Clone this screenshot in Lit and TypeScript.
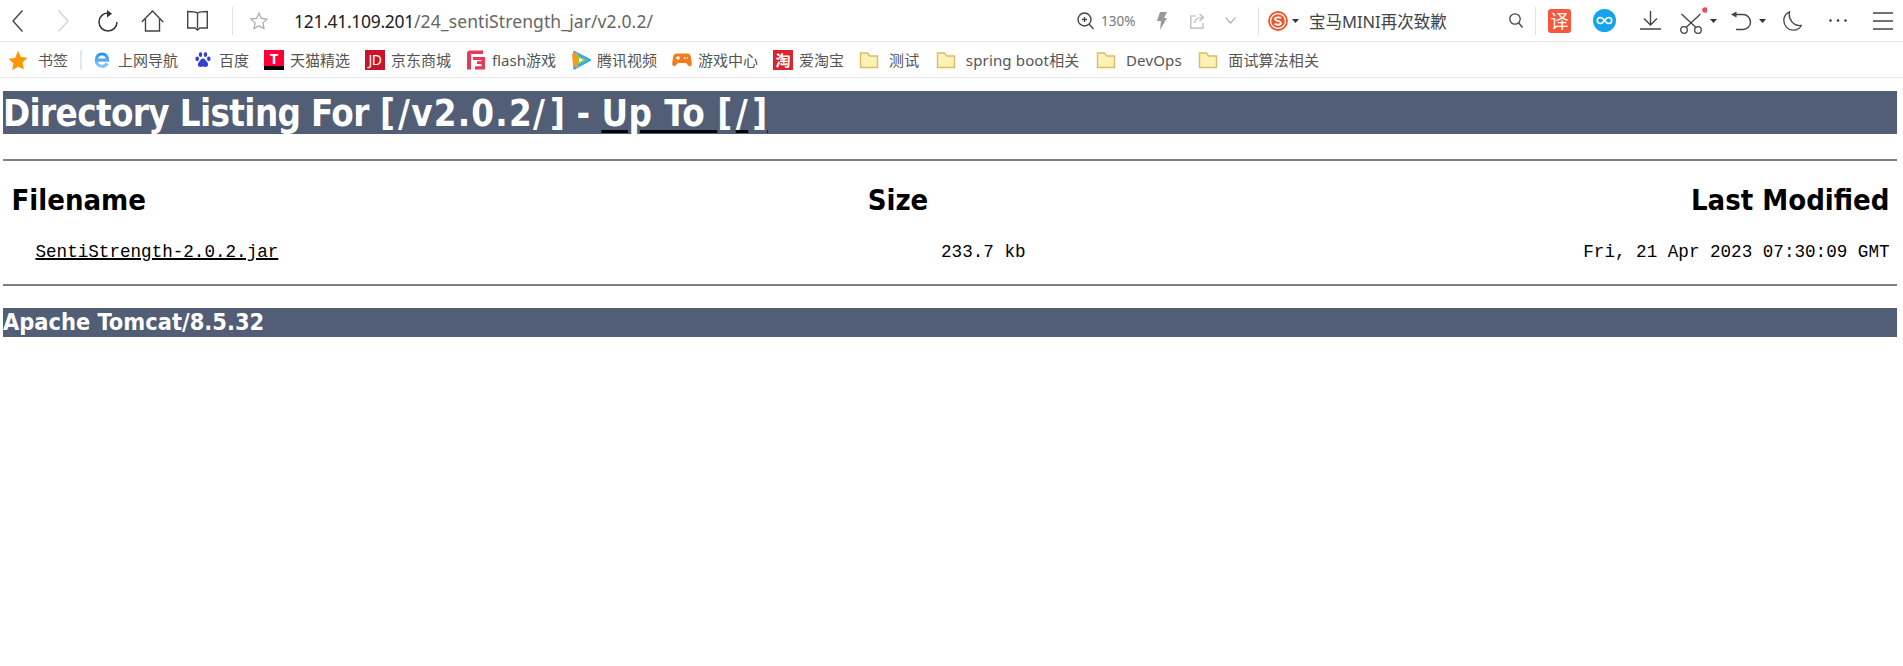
import { LitElement, html, css, svg } from 'lit';
import { customElement } from 'lit/decorators.js';

const ink = '#444';

const folder = svg`<svg class="ico" viewBox="0 0 20 20"><path d="M1.500 17.500V3h7l2 3h8v11.500z" fill="#fdf1b4" stroke="#d9bc6c" stroke-width="1.400"/></svg>`;

interface Bookmark {
  icon: unknown;
  label: string;
  folder?: boolean;
}

const bookmarks: Bookmark[] = [
  {
    label: '上网导航',
    icon: svg`<svg class="ico" viewBox="0 0 20 20"><defs><linearGradient id="ie" x1="0" y1="0" x2="0" y2="1"><stop offset="0" stop-color="#2f8ff0"/><stop offset="1" stop-color="#7fcbf8"/></linearGradient></defs><path d="M4.500 10.200h11.200C15.600 6.600 13.400 4 10 4S4.300 6.800 4.300 10.200 6.600 16.300 10 16.300c2.300 0 4.200-1 5.200-2.800" fill="none" stroke="url(#ie)" stroke-width="3.200"/></svg>`,
  },
  {
    label: '百度',
    icon: svg`<svg class="ico" viewBox="0 0 20 20" fill="#3240d8"><ellipse cx="7.500" cy="4.500" rx="1.700" ry="2.500"/><ellipse cx="12.500" cy="4.500" rx="1.700" ry="2.500"/><ellipse cx="4.200" cy="8.800" rx="1.800" ry="2.400"/><ellipse cx="15.800" cy="8.800" rx="1.800" ry="2.400"/><path d="M10 8.500c-2 0-2.500 2-4 3.500-1.800 1.700-1.500 5 1.500 5 1 0 1.500-.4 2.500-.4s1.500.4 2.500.4c3 0 3.300-3.300 1.500-5-1.500-1.500-2-3.500-4-3.500z"/></svg>`,
  },
  {
    label: '天猫精选',
    icon: html`<span class="ico tile tmall">T</span>`,
  },
  {
    label: '京东商城',
    icon: html`<span class="ico tile jd">JD</span>`,
  },
  {
    label: 'flash游戏',
    icon: svg`<svg class="ico" viewBox="0 0 20 20"><path d="M1 3.500Q1 .5 4 .5H17V4H5V19.500H1z" fill="#e8395a"/><path d="M7 7H19V19.500H9V16.300H15.500V14H11V11.200H15.500V10H7z" fill="#e8395a"/></svg>`,
  },
  {
    label: '腾讯视频',
    icon: svg`<svg class="ico" viewBox="0 0 20 20"><path d="M3 1.500 19.500 10 3 19z" fill="#3aa6ee" stroke="#3aa6ee" stroke-width="1.500" stroke-linejoin="round"/><path d="M1 4 7 2V18L2 16z" fill="#f59a23"/><path d="M6 5.500 16 10 6 15z" fill="#8ccf2d"/><path d="M8 7.800 12.500 10 8 12.500z" fill="#fff"/></svg>`,
  },
  {
    label: '游戏中心',
    icon: svg`<svg class="ico" viewBox="0 0 20 20"><path d="M4.500 3.500h11c2 0 3 1.500 3.500 4l.8 6c.3 2.500-2.300 3.500-3.800 1.800L14 13H6l-2 2.300C2.500 17 0 16 .2 13.500l.8-6c.5-2.500 1.500-4 3.500-4z" fill="#f57c1c"/><path d="M4 8h4M6 6v4M12 8h1.500M15 8h1" stroke="#fff" stroke-width="1.400"/></svg>`,
  },
  {
    label: '爱淘宝',
    icon: html`<span class="ico tile taobao">淘</span>`,
  },
  { label: '测试', icon: folder, folder: true },
  { label: 'spring boot相关', icon: folder, folder: true },
  { label: 'DevOps', icon: folder, folder: true },
  { label: '面试算法相关', icon: folder, folder: true },
];

@customElement('app-root')
export class AppRoot extends LitElement {
  static styles = css`
    :host {
      display: block;
      background: #fff;
      min-height: 666px;
      font-family: 'Noto Sans', 'Noto Sans CJK SC', sans-serif;
    }

    svg {
      display: block;
      flex: none;
    }

    .toolbar {
      display: flex;
      align-items: center;
      height: 41px;
      padding: 0 10px 0 12px;
      border-bottom: 1px solid #e6e6e6;
    }

    .sep {
      width: 1px;
      height: 28px;
      background: #e2e2e2;
      flex: none;
    }

    .fwd { margin-left: 35px; }
    .refresh { margin-left: 29px; }
    .home { margin-left: 23px; }
    .book { margin-left: 23px; }
    .sep-a { margin-left: 24px; }
    .star { margin-left: 17px; }

    .url {
      margin-left: 26px;
      font-size: 17.5px;
      color: #666;
      white-space: nowrap;
      flex: 1;
      letter-spacing: 0.1px;
    }

    .url b {
      font-weight: 400;
      color: #222;
      letter-spacing: -0.3px;
    }

    .zoom-pct {
      margin-left: 7px;
      font-size: 13.5px;
      color: #777;
      width: 34px;
      white-space: nowrap;
    }

    .bolt { margin-left: 22px; }
    .share { margin-left: 23px; }
    .chev { margin-left: 20px; }
    .sep-b { margin-left: 22px; }
    .sogou { margin-left: 9px; }
    .caret-s { margin-left: 4px; }
    .caret-t { margin-left: 3px; }
    .caret-u { margin-left: 7px; }

    .news {
      margin-left: 10px;
      width: 200px;
      font-size: 16.5px;
      color: #444;
      white-space: nowrap;
    }

    .sep-c { margin-left: 12px; }

    .fanyi {
      margin-left: 12px;
      width: 23px;
      height: 24px;
      border-radius: 3px;
      background: #f5583c;
      color: #fff;
      font-size: 18px;
      line-height: 24px;
      text-align: center;
      flex: none;
    }

    .blue { margin-left: 22px; }
    .down { margin-left: 24px; }
    .cut { margin-left: 19px; }
    .undo { margin-left: 14px; }
    .moon { margin-left: 17px; }
    .dots { margin-left: 27px; }
    .menu { margin-left: 26px; }

    .bookmarks {
      display: flex;
      align-items: center;
      height: 35px;
      padding-left: 8px;
      border-bottom: 1px solid #e6e6e6;
      font-size: 15px;
      color: #555;
      white-space: nowrap;
    }

    .mark {
      display: flex;
      align-items: center;
      gap: 6px;
      margin-right: 15px;
    }

    .mark.dir {
      gap: 10px;
      margin-right: 16.5px;
      letter-spacing: 0.15px;
    }

    .mark.root {
      gap: 10px;
      margin-right: 12px;
    }

    .bar-sep {
      width: 2px;
      height: 20px;
      background: #e6e6e6;
      margin-right: 10px;
    }

    .ico {
      width: 20px;
      height: 20px;
      flex: none;
    }

    .tile {
      display: block;
      text-align: center;
      color: #fff;
      line-height: 20px;
    }

    .tmall {
      background: linear-gradient(#ff0036 78%, #000 78%);
      font-weight: 700;
      font-size: 15px;
      line-height: 16px;
    }

    .jd {
      background: #c9132a;
      font-size: 14px;
      letter-spacing: -0.5px;
    }

    .taobao {
      background: #d9262e;
      font-size: 15px;
      font-weight: 700;
    }

    .page {
      padding: 13px 6px 0 3px;
    }

    h1,
    h3 {
      margin: 0;
      background: #525d76;
      color: #fff;
      font-family: 'DejaVu Sans', sans-serif;
      font-stretch: condensed;
      font-weight: 700;
    }

    h1 {
      font-size: 36.4px;
      line-height: 40px;
      padding-top: 3px;
      white-space: nowrap;
    }

    h1 a {
      color: #fff;
      letter-spacing: 0.5px;
      text-decoration: underline #000;
      text-decoration-thickness: 3px;
      text-underline-offset: 4px;
    }

    .tight {
      letter-spacing: -0.65px;
    }

    .path {
      letter-spacing: 1.2px;
    }

    .open {
      padding-right: 3px;
    }

    .close {
      padding-left: 4px;
    }

    h3 {
      font-size: 23.4px;
      line-height: 29px;
    }

    hr {
      margin: 0;
      border: none;
      height: 2px;
      background: #808080;
    }

    .rule-top {
      margin-top: 25px;
    }

    .rule-bottom {
      margin-bottom: 22px;
    }

    .listing {
      display: grid;
      grid-template-columns: 761px 268px 1fr;
      padding-top: 14px;
      padding-bottom: 13px;
    }

    .listing > * {
      padding: 6.5px;
    }

    .listing > .first {
      padding-left: 8.5px;
    }

    .listing > .right {
      padding-right: 7.5px;
    }

    .listing > .size {
      padding-right: 6.5px;
    }

    .th {
      font-family: 'DejaVu Sans', sans-serif;
      font-stretch: condensed;
      font-weight: 700;
      font-size: 29px;
      line-height: 37px;
      color: #000;
    }

    .td {
      font-family: 'Liberation Mono', monospace;
      font-size: 17.6px;
      line-height: 24px;
      color: #000;
      padding-top: 15px;
    }

    .center { text-align: center; }
    .right { text-align: right; }

    .td a {
      color: #000;
      text-decoration: underline;
      text-decoration-thickness: 2px;
    }

    .indent {
      padding-left: 26px;
    }
  `;

  render() {
    return html`
      <div class="toolbar">
        <svg width="11" height="22" viewBox="0 0 11 22"><path d="M10.500 .5 1 11l9.500 10.500" fill="none" stroke="${ink}" stroke-width="1.400"/></svg>
        <svg class="fwd" width="11" height="22" viewBox="0 0 11 22"><path d="M.5 .5 10 11 .5 21.500" fill="none" stroke="#d4d4d4" stroke-width="1.400"/></svg>
        <svg class="refresh" width="20" height="22" viewBox="0 0 20 22"><path d="M10 3a9 9 0 1 0 9 9" fill="none" stroke="#333" stroke-width="1.500"/><path d="M9 0v7.500l5-3.700z" fill="#333"/></svg>
        <svg class="home" width="23" height="22" viewBox="0 0 23 22"><path d="M.8 12 11.500 1 22.200 12M4.500 9v12h14V9" fill="none" stroke="${ink}" stroke-width="1.400"/></svg>
        <svg class="book" width="21" height="21" viewBox="0 0 21 21"><path d="M10.500 3V18.500M10.500 3C8 1.500 4 1.500 .7 1.500V18H8l2.500 2 2.500-2h7.300V1.500C17 1.500 13 1.500 10.500 3z" fill="none" stroke="${ink}" stroke-width="1.400"/></svg>
        <span class="sep sep-a"></span>
        <svg class="star" width="18" height="18" viewBox="0 0 18 18"><path d="M9 1.200l2.400 5.200 5.600.7-4.100 3.800 1.100 5.600L9 13.700l-5 2.800 1.100-5.600L1 7.100l5.600-.7z" fill="none" stroke="#aaa" stroke-width="1.200"/></svg>
        <span class="url"><b>121.41.109.201</b>/24_sentiStrength_jar/v2.0.2/</span>

        <svg width="17" height="18" viewBox="0 0 17 18"><circle cx="7.500" cy="7.500" r="6.500" fill="none" stroke="${ink}" stroke-width="1.400"/><path d="M12 12l4.500 5M5 7.500h5M7.500 5v5" fill="none" stroke="${ink}" stroke-width="1.300"/></svg>
        <span class="zoom-pct">130%</span>
        <svg class="bolt" width="10" height="18" viewBox="0 0 10 18"><path d="M3 0h7L7 6h3L3 18l1-9H0z" fill="#999"/></svg>
        <svg class="share" width="15" height="16" viewBox="0 0 15 16"><path d="M6 3H.8V15.200H13V10" fill="none" stroke="#b5b5b5" stroke-width="1.200"/><path d="M4.500 10C5 6 8 4.500 12 4.500M9.500 1 13.500 4.500 9.500 8" fill="none" stroke="#b5b5b5" stroke-width="1.200"/></svg>
        <svg class="chev" width="11" height="7" viewBox="0 0 11 7"><path d="M.5 .5 5.500 6l5-5.500" fill="none" stroke="#999" stroke-width="1.100"/></svg>
        <span class="sep sep-b"></span>
        <svg class="sogou" width="20" height="20" viewBox="0 0 20 20"><circle cx="10" cy="10" r="9" fill="#fff" stroke="#f0562b" stroke-width="1.800"/><circle cx="10" cy="10" r="6.800" fill="#f0562b"/><path d="M13 7.300C12 6 7 5.800 7 8c0 2.400 6 1.600 6 4 0 2.300-5 2.100-6.300.7" fill="none" stroke="#fff" stroke-width="1.800"/></svg>
        <svg class="caret-s" width="7" height="4" viewBox="0 0 7 4"><path d="M0 0h7L3.500 4z" fill="#333"/></svg>
        <span class="news">宝马MINI再次致歉</span>
        <svg width="14" height="15" viewBox="0 0 14 15"><circle cx="6" cy="6" r="5.200" fill="none" stroke="${ink}" stroke-width="1.300"/><path d="M9.800 10l3.700 4.500" stroke="${ink}" stroke-width="1.300"/></svg>
        <span class="sep sep-c"></span>
        <span class="fanyi">译</span>
        <svg class="blue" width="23" height="23" viewBox="0 0 23 23"><circle cx="11.500" cy="11.500" r="11.500" fill="#16a3ec"/><path d="M11.500 11.500C10 9.300 8.800 8.500 7.300 8.500a3 3 0 0 0 0 6c1.500 0 2.700-.8 4.200-3s2.700-3 4.200-3a3 3 0 0 1 0 6c-1.500 0-2.700-.8-4.200-3z" fill="none" stroke="#fff" stroke-width="1.600"/></svg>
        <svg class="down" width="21" height="19" viewBox="0 0 21 19"><path d="M10.500 0V13.500M4 7.500l6.500 6.500L17 7.500M0 18h21" fill="none" stroke="${ink}" stroke-width="1.400"/></svg>
        <svg class="cut" width="27" height="28" viewBox="0 0 27 28"><circle cx="4" cy="23" r="3.300" fill="none" stroke="${ink}" stroke-width="1.300"/><circle cx="18" cy="23" r="3.300" fill="none" stroke="${ink}" stroke-width="1.300"/><path d="M6 20.500 20.500 7M16 20.500 1.500 7" fill="none" stroke="${ink}" stroke-width="1.300"/><circle cx="25" cy="3" r="2.800" fill="#f04b5a"/></svg>
        <svg class="caret-t" width="7" height="4" viewBox="0 0 7 4"><path d="M0 0h7L3.500 4z" fill="#333"/></svg>
        <svg class="undo" width="21" height="20" viewBox="0 0 21 20"><path d="M4 3.500H12a7.500 7.500 0 0 1 0 15H5" fill="none" stroke="${ink}" stroke-width="1.400"/><path d="M0 3.500 5.500 .5V6.500z" fill="${ink}"/></svg>
        <svg class="caret-u" width="7" height="4" viewBox="0 0 7 4"><path d="M0 0h7L3.500 4z" fill="#333"/></svg>
        <svg class="moon" width="19" height="20" viewBox="0 0 19 20"><path d="M6.500 .8C3 2.500 .8 5.800 .8 9.500c0 5.300 4.200 9.700 9.500 9.700 3.500 0 6.500-1.800 8-4.700-6.500 1.200-13.500-5-11.800-13.700z" fill="none" stroke="${ink}" stroke-width="1.300"/></svg>
        <svg class="dots" width="18" height="3" viewBox="0 0 18 3" fill="#333"><circle cx="1.500" cy="1.500" r="1.200"/><circle cx="9" cy="1.500" r="1.200"/><circle cx="16.500" cy="1.500" r="1.200"/></svg>
        <svg class="menu" width="20" height="18" viewBox="0 0 20 18"><path d="M0 1h20M0 9h20M0 17h20" stroke="${ink}" stroke-width="1.400"/></svg>
      </div>

      <div class="bookmarks">
        <div class="mark root">
          <svg class="ico" viewBox="0 0 20 20"><path d="M10 .8l2.800 6.300 6.700.7-5 4.600 1.400 6.800L10 16.700l-5.900 3.500 1.400-6.800-5-4.600 6.700-.7z" fill="#ff9500"/></svg>
          <span>书签</span>
        </div>
        <span class="bar-sep"></span>
        ${bookmarks.map(
          (b) => html`
            <div class="mark ${b.folder ? 'dir' : ''}">
              ${b.icon}
              <span>${b.label}</span>
            </div>
          `
        )}
      </div>

      <div class="page">
        <h1><span class="tight">Directory Listing For</span> <span class="open">[</span><span class="path">/v2.0.2/</span><span class="close">]</span> - <a href="#">Up To <span class="open">[</span>/<span class="close">]</span></a></h1>
        <hr class="rule-top" />
        <div class="listing">
          <div class="th first">Filename</div>
          <div class="th center">Size</div>
          <div class="th right">Last Modified</div>
          <div class="td"><span class="indent"><a href="#">SentiStrength-2.0.2.jar</a></span></div>
          <div class="td size right">233.7 kb</div>
          <div class="td right">Fri, 21 Apr 2023 07:30:09 GMT</div>
        </div>
        <hr class="rule-bottom" />
        <h3>Apache Tomcat/8.5.32</h3>
      </div>
    `;
  }
}

declare global {
  interface HTMLElementTagNameMap {
    'app-root': AppRoot;
  }
}
